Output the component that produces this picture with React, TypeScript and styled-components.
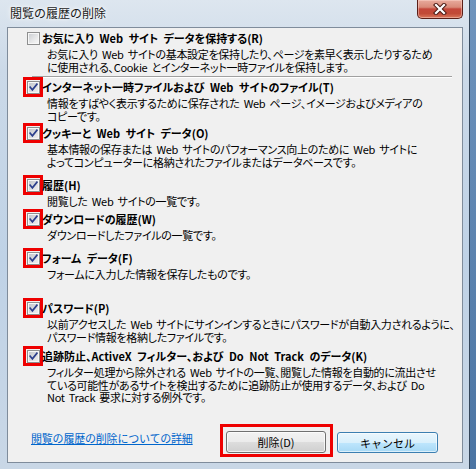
import React from 'react';
import styled, { createGlobalStyle } from 'styled-components';

const Global = createGlobalStyle`
  html, body { margin: 0; padding: 0; }
  body {
    width: 476px; height: 469px; overflow: hidden;
    font-family: "Noto Sans CJK JP", "Noto Sans", sans-serif;
    color: #000;
  }
`;

const Desktop = styled.div`
  width: 476px; height: 469px;
  background: linear-gradient(180deg, #6f94bd 0%, #4a74a3 100%);
  display: flex;
`;

const Window = styled.div`
  width: 470px; height: 469px;
  box-sizing: border-box;
  border-right: 1px solid #34465a;
  background: linear-gradient(180deg, #dde6ef 0%, #cbd9e8 15%, #bfd2e6 55%, #c9d7e6 100%);
  display: flex; flex-direction: column;
  padding: 0 6px 6px 7px;
`;

const TitleBar = styled.div`
  height: 27px;
  display: flex;
  justify-content: space-between;
  align-items: flex-start;
`;

const Title = styled.div`
  padding: 5px 0 0 3px;
  font-size: 12px;
  line-height: 16px;
  color: #1a1a1a;
  text-shadow: 0 0 6px #fff, 0 0 3px #fff;
`;

const CloseButton = styled.div`
  width: 46px; height: 19px;
  box-sizing: border-box;
  border: 1px solid #5a1f18;
  border-top: none;
  border-radius: 0 0 5px 5px;
  background: linear-gradient(180deg, #e8ab9d 0%, #d98a79 40%, #c4473a 50%, #c14a37 75%, #d9785c 100%);
  box-shadow: inset 0 0 0 1px rgba(255, 220, 210, 0.45);
  display: flex; align-items: center; justify-content: center;
`;

const Client = styled.div`
  flex: 1;
  border: 1px solid #7f8c9b;
  background: #f0f0f0;
  display: flex; flex-direction: column;
`;

const List = styled.div`
  display: flex; flex-direction: column;
  padding-left: 15px;
`;

const Item = styled.div<{ $gap: number }>`
  margin-top: ${p => p.$gap}px;
  display: flex; flex-direction: column;
`;

const Row = styled.div`
  height: 20px;
  display: flex; align-items: center;
`;

const Marker = styled.span<{ $on: boolean }>`
  width: 20px; height: 20px; box-sizing: border-box;
  border: 3px solid ${p => (p.$on ? '#ee0000' : 'transparent')};
  display: flex; align-items: center; justify-content: center;
  flex: none;
`;

const Box = styled.span`
  width: 13px; height: 13px; box-sizing: border-box;
  border: 1px solid #8e8f8f;
  padding: 1px;
  background: #f7f7f7;
  display: flex;
  position: relative;
`;

const BoxFace = styled.span<{ $checked: boolean }>`
  flex: 1;
  background: ${p => p.$checked
    ? 'linear-gradient(135deg, #c3c6cb 0%, #dfe0e2 60%, #eeeeee 100%)'
    : 'linear-gradient(135deg, #cdd0d4 0%, #e6e7e8 55%, #f6f6f6 100%)'};
`;

const Check = styled.svg`
  position: absolute;
  left: 1px; top: 1px;
`;

const ItemTitle = styled.span`
  margin-left: -1px;
  font-size: 11px;
  font-weight: 700;
  line-height: 14px;
  white-space: nowrap;
  word-spacing: 3px;
  font-feature-settings: "palt";
`;

const Desc = styled.div`
  margin-left: 24px;
  font-size: 11px;
  line-height: 12.5px;
  white-space: nowrap;
  letter-spacing: -0.3px;
  word-spacing: 2px;
  font-feature-settings: "palt";
`;

const Separator = styled.div`
  margin: 3px 0 0 9px;
  width: 420px;
  height: 1px;
  background: #a0a0a0;
  border-bottom: 1px solid #ffffff;
`;

const Footer = styled.div`
  margin-top: auto;
  display: flex;
  align-items: flex-end;
  padding: 0 24px 5px 23px;
`;

const HelpLink = styled.a`
  margin-bottom: 12px;
  font-size: 11px;
  line-height: 14px;
  letter-spacing: -0.2px;
  color: #0066cc;
  text-decoration: underline;
  white-space: nowrap;
`;

const Spacer = styled.div`
  flex: 1;
`;

const Highlight = styled.div`
  border: 3px solid #ee0000;
  padding: 4px 4px 1px 3px;
  display: flex;
`;

const Button = styled.div<{ $default?: boolean }>`
  width: ${p => (p.$default ? 101 : 100)}px;
  height: ${p => (p.$default ? 21 : 22)}px;
  box-sizing: border-box;
  border: 1px solid ${p => (p.$default ? '#3c7fb1' : '#707070')};
  border-radius: 3px;
  background: ${p => p.$default
    ? 'linear-gradient(180deg, #eaf6fd 0%, #d9f0fc 50%, #bee6fd 51%, #a7d9f5 100%)'
    : 'linear-gradient(180deg, #f2f2f2 0%, #ebebeb 50%, #dddddd 51%, #cfcfcf 100%)'};
  box-shadow: inset 0 0 0 1px ${p => (p.$default ? 'rgba(255,255,255,0.6)' : 'rgba(255,255,255,0.7)')};
  display: flex; align-items: center; justify-content: center;
  font-size: 11px;
  line-height: 14px;
  white-space: nowrap;
`;

const CancelSlot = styled.div`
  margin: 0 0 4px 4px;
  display: flex;
`;

type ItemData = {
  title: string;
  lines: string[];
  checked: boolean;
  gap: number;
};

const items: ItemData[] = [
  {
    title: 'お気に入り Web サイト データを保持する(R)',
    lines: [
      'お気に入り Web サイトの基本設定を保持したり、ページを素早く表示したりするため',
      'に使用される、Cookie とインターネット一時ファイルを保持します。',
    ],
    checked: false,
    gap: 0,
  },
  {
    title: 'インターネット一時ファイルおよび Web サイトのファイル(T)',
    lines: [
      '情報をすばやく表示するために保存された Web ページ、イメージおよびメディアの',
      'コピーです。',
    ],
    checked: true,
    gap: -1,
  },
  {
    title: 'クッキーと Web サイト データ(O)',
    lines: [
      '基本情報の保存または Web サイトのパフォーマンス向上のために Web サイトに',
      'よってコンピューターに格納されたファイルまたはデータベースです。',
    ],
    checked: true,
    gap: 1,
  },
  {
    title: '履歴(H)',
    lines: ['閲覧した Web サイトの一覧です。'],
    checked: true,
    gap: 7,
  },
  {
    title: 'ダウンロードの履歴(W)',
    lines: ['ダウンロードしたファイルの一覧です。'],
    checked: true,
    gap: 1.5,
  },
  {
    title: 'フォーム データ(F)',
    lines: ['フォームに入力した情報を保存したものです。'],
    checked: true,
    gap: 6.5,
  },
  {
    title: 'パスワード(P)',
    lines: [
      '以前アクセスした Web サイトにサインインするときにパスワードが自動入力されるように、',
      'パスワード情報を格納したファイルです。',
    ],
    checked: true,
    gap: 17.5,
  },
  {
    title: '追跡防止、ActiveX フィルター、および Do Not Track のデータ(K)',
    lines: [
      'フィルター処理から除外される Web サイトの一覧、閲覧した情報を自動的に流出させ',
      'ている可能性があるサイトを検出するために追跡防止が使用するデータ、および Do',
      'Not Track 要求に対する例外です。',
    ],
    checked: true,
    gap: 3,
  },
];

function CheckBox({ checked }: { checked: boolean }) {
  return (
    <Box>
      <BoxFace $checked={checked} />
      {checked && (
        <Check width="9" height="9" viewBox="0 0 9 9">
          <path d="M1.2 4.2 L3.4 6.8 L7.9 1.2" fill="none" stroke="#2c3f8c" strokeWidth="1.7" strokeLinecap="square" />
        </Check>
      )}
    </Box>
  );
}

export default function App() {
  return (
    <>
      <Global />
      <Desktop>
        <Window>
          <TitleBar>
            <Title>閲覧の履歴の削除</Title>
            <CloseButton aria-label="閉じる">
              <svg width="14" height="12" viewBox="0 0 14 12">
                <path d="M3 2 L11 10 M11 2 L3 10" stroke="#4b1a14" strokeWidth="4.2" strokeLinecap="square" fill="none" />
                <path d="M3 2 L11 10 M11 2 L3 10" stroke="#ffffff" strokeWidth="2.2" strokeLinecap="square" fill="none" />
              </svg>
            </CloseButton>
          </TitleBar>
          <Client>
            <List>
              {items.map((it, i) => (
                <React.Fragment key={it.title}>
                  <Item $gap={it.gap}>
                    <Row>
                      <Marker $on={it.checked}>
                        <CheckBox checked={it.checked} />
                      </Marker>
                      <ItemTitle>{it.title}</ItemTitle>
                    </Row>
                    <Desc>
                      {it.lines.map(l => (
                        <div key={l}>{l}</div>
                      ))}
                    </Desc>
                  </Item>
                  {i === 0 && <Separator />}
                </React.Fragment>
              ))}
            </List>
            <Footer>
              <HelpLink href="#">閲覧の履歴の削除についての詳細</HelpLink>
              <Spacer />
              <Highlight>
                <Button>削除(D)</Button>
              </Highlight>
              <CancelSlot>
                <Button $default>キャンセル</Button>
              </CancelSlot>
            </Footer>
          </Client>
        </Window>
      </Desktop>
    </>
  );
}
